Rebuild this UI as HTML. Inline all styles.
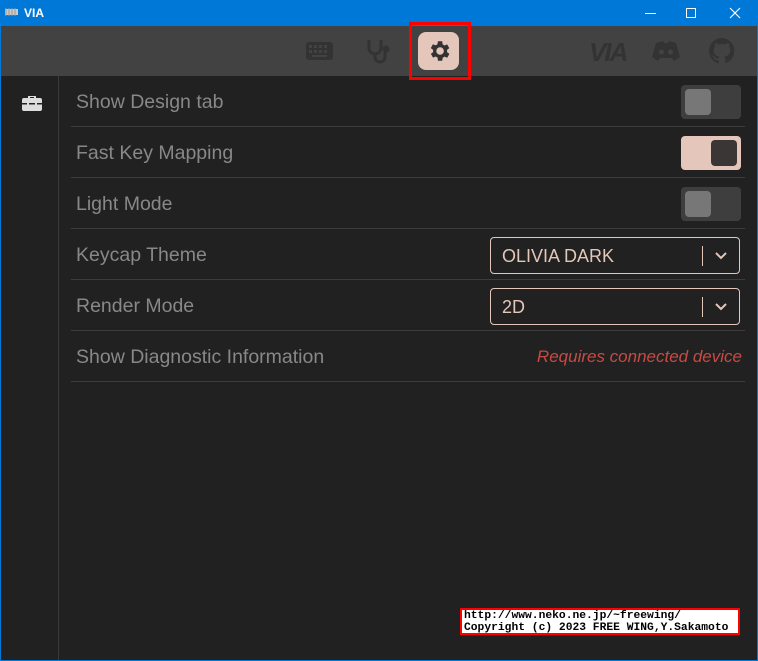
<!DOCTYPE html>
<html><head><style>
*{margin:0;padding:0;box-sizing:border-box}
body{width:758px;height:661px;background:#0078d7;position:relative;overflow:hidden;font-family:"Liberation Sans",sans-serif}
#title{position:absolute;left:0;top:0;width:758px;height:26px;color:#fff;font-size:12px;font-weight:bold}
#win{position:absolute;left:1px;top:26px;width:756px;height:634px;background:#212121}
#hdr{position:absolute;left:0;top:0;width:756px;height:50px;background:#424242}
#side{position:absolute;left:57px;top:50px;width:1px;height:584px;background:#3a3a3a}
.row{position:absolute;left:70px;width:674px;height:51px;border-bottom:1px solid #3c3c3c;color:#888;font-size:19.5px;line-height:52px;padding-left:5px}
.tg{position:absolute;right:4px;top:9px;width:60px;height:34px;border-radius:4px;background:#3e3e3e}
.tg i{position:absolute;left:4px;top:4px;width:26px;height:26px;border-radius:4px;background:#777}
.tg.on{background:#e4c6ba}.tg.on i{left:30px;background:#3a3636}
.sel{position:absolute;right:5px;top:8px;width:250px;height:37px;border:1px solid #e4c6ba;border-radius:4px;color:#e4c6ba;font-size:18px;line-height:36px;padding-left:11px}
.sel b{position:absolute;right:36px;top:8px;width:1px;height:20px;background:#e4c6ba}
.sel svg{position:absolute;right:12px;top:14px}
</style></head><body>
<div id="title">
<svg style="position:absolute;left:4px;top:7px" width="15" height="10"><rect x="1" y="2" width="13" height="6" fill="#ccc"/><path d="M2 1v8M5 1v8M8 1v8M11 1v8" stroke="#999"/></svg>
<span style="position:absolute;left:24px;top:6px">VIA</span>
<div style="position:absolute;left:645px;top:13px;width:11px;height:1px;background:#fff"></div>
<div style="position:absolute;left:686px;top:8px;width:10px;height:10px;border:1px solid #fff"></div>
<svg style="position:absolute;left:729px;top:7px" width="12" height="12"><path d="M1 1L11 11M11 1L1 11" stroke="#fff" stroke-width="1.2"/></svg>
</div>
<div id="win">
<div id="hdr">
<svg style="position:absolute;left:305px;top:16px" width="28" height="18"><rect x="0" y="0" width="27" height="18" rx="3" fill="#333"/><g fill="#424242"><rect x="3" y="3" width="3" height="3"/><rect x="8" y="3" width="3" height="3"/><rect x="13" y="3" width="3" height="3"/><rect x="18" y="3" width="3" height="3"/><rect x="3" y="8" width="3" height="3"/><rect x="8" y="8" width="3" height="3"/><rect x="13" y="8" width="3" height="3"/><rect x="18" y="8" width="3" height="3"/><rect x="6" y="13" width="15" height="2"/></g></svg>
<svg style="position:absolute;left:364px;top:12px" width="28" height="26"><path d="M4 2v8a6 6 0 0 0 12 0V2M10 16v3a5 5 0 0 0 10 0v-5" fill="none" stroke="#333" stroke-width="3"/><circle cx="21" cy="11" r="3.5" fill="#333"/></svg>
<div style="position:absolute;left:408px;top:-4px;width:62px;height:58px;border:3px solid #f00"></div>
<div style="position:absolute;left:417px;top:6px;width:41px;height:38px;border-radius:8px;background:#e4c6ba"></div>
<svg style="position:absolute;left:425px;top:12px" width="26" height="26" viewBox="0 0 24 24"><path fill="#333" d="M19.4 13a7.5 7.5 0 0 0 0-2l2.1-1.6-2-3.5-2.5 1a7 7 0 0 0-1.7-1L15 3h-4l-.4 2.8a7 7 0 0 0-1.7 1l-2.5-1-2 3.5L6.6 11a7.5 7.5 0 0 0 0 2l-2.1 1.6 2 3.5 2.5-1a7 7 0 0 0 1.7 1L11 21h4l.4-2.8a7 7 0 0 0 1.7-1l2.5 1 2-3.5zM13 15.5a3.5 3.5 0 1 1 0-7 3.5 3.5 0 0 1 0 7z"/></svg>
<span style="position:absolute;left:588px;top:11px;font-size:26px;font-weight:bold;color:#333;font-style:italic;letter-spacing:-2px">VIA</span>
<svg style="position:absolute;left:650px;top:14px" width="30" height="22" viewBox="0 0 30 22"><path fill="#333" d="M5 3l7-2 1 2h4l1-2 7 2 4 14-6 4-2-3h-12l-2 3-6-4z"/><circle cx="10.5" cy="12" r="2.5" fill="#424242"/><circle cx="19.5" cy="12" r="2.5" fill="#424242"/></svg>
<svg style="position:absolute;left:708px;top:12px" width="26" height="26" viewBox="0 0 16 16"><path fill="#333" d="M8 0a8 8 0 0 0-2.5 15.6c.4 0 .5-.2.5-.4v-1.5c-2.2.5-2.7-1-2.7-1-.4-.9-.9-1.2-.9-1.2-.7-.5.1-.5.1-.5.8.1 1.2.8 1.2.8.7 1.3 1.9.9 2.3.7.1-.5.3-.9.5-1.1-1.8-.2-3.6-.9-3.6-4 0-.9.3-1.6.8-2.1-.1-.2-.4-1 .1-2.1 0 0 .7-.2 2.2.8a7.5 7.5 0 0 1 4 0c1.5-1 2.2-.8 2.2-.8.4 1.1.2 1.9.1 2.1.5.6.8 1.3.8 2.1 0 3.1-1.9 3.7-3.6 3.9.3.3.5.8.5 1.5v2.2c0 .2.1.5.6.4A8 8 0 0 0 8 0z"/></svg>
</div>
<div id="side"></div>
<svg style="position:absolute;left:21px;top:69px" width="20" height="16" viewBox="0 0 20 16"><path fill="#ddd" d="M6 3V1h8v2h4a2 2 0 0 1 2 2v9a2 2 0 0 1-2 2H2a2 2 0 0 1-2-2V5a2 2 0 0 1 2-2zm2 0h4V2H8z"/><rect x="0" y="8" width="20" height="1.5" fill="#212121"/><rect x="5" y="7" width="2" height="4" fill="#ddd"/><rect x="13" y="7" width="2" height="4" fill="#ddd"/></svg>
<div class="row" style="top:50px">Show Design tab<div class="tg"><i></i></div></div>
<div class="row" style="top:101px">Fast Key Mapping<div class="tg on"><i></i></div></div>
<div class="row" style="top:152px">Light Mode<div class="tg"><i></i></div></div>
<div class="row" style="top:203px">Keycap Theme<div class="sel">OLIVIA DARK<b></b><svg width="12" height="8"><path d="M1 1l5 5 5-5" fill="none" stroke="#e4c6ba" stroke-width="2"/></svg></div></div>
<div class="row" style="top:254px">Render Mode<div class="sel">2D<b></b><svg width="12" height="8"><path d="M1 1l5 5 5-5" fill="none" stroke="#e4c6ba" stroke-width="2"/></svg></div></div>
<div class="row" style="top:305px">Show Diagnostic Information<span style="position:absolute;right:3px;top:0;color:#c94a43;font-style:italic;font-size:17px">Requires connected device</span></div>
<div style="position:absolute;left:459px;top:582px;width:280px;height:27px;background:#fff;border:2px solid #f00;font-family:'Liberation Mono',monospace;font-weight:bold;font-size:11.3px;line-height:11.5px;color:#000;padding:1px 2px;white-space:nowrap;overflow:hidden">http://www.neko.ne.jp/~freewing/<br>Copyright (c) 2023 FREE WING,Y.Sakamoto</div>
</div>
</body></html>
